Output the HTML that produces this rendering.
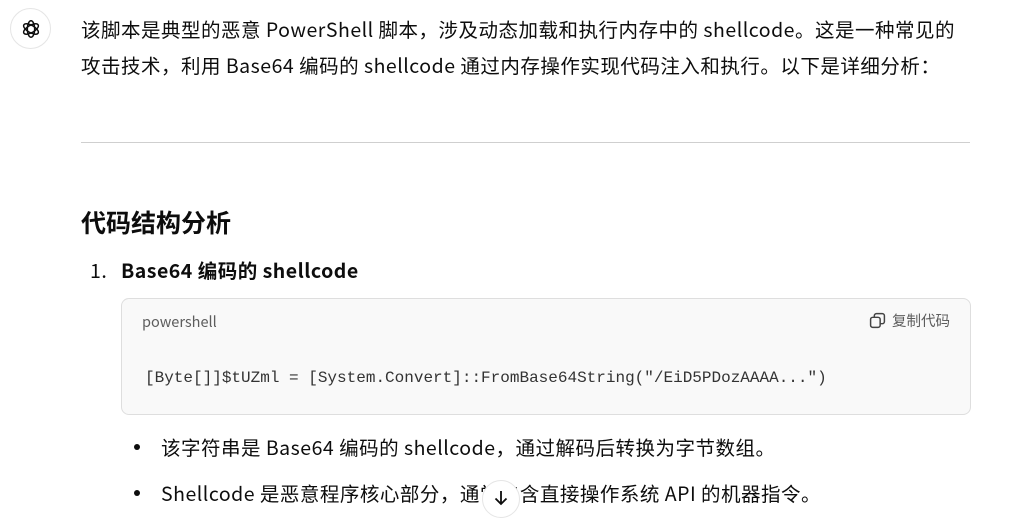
<!DOCTYPE html>
<html><head><meta charset="utf-8"><style>
body{margin:0;width:1036px;height:511px;overflow:hidden;background:#fff;font-family:"Noto Sans CJK SC","Liberation Sans",sans-serif;color:#0d0d0d;position:relative}
.t{position:absolute;left:81px;font-size:19.5px;white-space:nowrap;line-height:24px;letter-spacing:0.5px}
.av{position:absolute;left:10px;top:8px;width:41px;height:41px;border:1px solid #e5e5e5;border-radius:50%;display:flex;align-items:center;justify-content:center;box-sizing:border-box}
hr{position:absolute;left:81px;top:142px;width:889px;margin:0;border:0;border-top:1px solid #cfcfcf}
.code{position:absolute;left:121px;top:298px;width:848px;height:115px;border:1px solid #dedede;border-radius:8px;background:#f9f9f9}
.code .l{position:absolute;left:20px;top:12px;font-size:14.5px;color:#5d5d5d}
.code .c{position:absolute;right:20px;top:11px;font-size:14.5px;color:#5d5d5d;display:flex;align-items:center;gap:6px}
.code pre{position:absolute;left:23px;top:70px;margin:0;font-family:"Liberation Mono","DejaVu Sans Mono",monospace;font-size:16px;color:#333}
.dot{position:absolute;left:134px;width:6px;height:6px;border-radius:50%;background:#0d0d0d}
.arr{position:absolute;left:482px;top:480px;width:38px;height:38px;border:1px solid #e5e5e5;border-radius:50%;background:#fff;display:flex;justify-content:center;padding-top:8px;box-sizing:border-box}
</style></head><body>
<div class="av"><svg width="22" height="22" viewBox="0 0 24 24" fill="none" stroke="#0d0d0d" stroke-width="1.6"><g transform="translate(12 12)"><ellipse rx="4" ry="9" transform="rotate(0)"/><ellipse rx="4" ry="9" transform="rotate(60)"/><ellipse rx="4" ry="9" transform="rotate(120)"/></g></svg></div>
<div class="t" style="top:17px">该脚本是典型的恶意 PowerShell 脚本，涉及动态加载和执行内存中的 shellcode。这是一种常见的</div>
<div class="t" style="top:53px">攻击技术，利用 Base64 编码的 shellcode 通过内存操作实现代码注入和执行。以下是详细分析：</div>
<hr>
<div class="t" style="top:207px;font-size:25px;font-weight:bold;line-height:30px;letter-spacing:0">代码结构分析</div>
<div class="t" style="top:258px;left:90px">1.</div>
<div class="t" style="top:258px;left:121px;font-weight:bold">Base64 编码的 shellcode</div>
<div class="code"><div class="l">powershell</div><div class="c"><svg width="17" height="17" viewBox="0 0 16 16" fill="none" stroke="#444" stroke-width="1.4"><rect x="1.5" y="5" width="9" height="9.5" rx="2"/><path d="M5 5V3.5a2 2 0 0 1 2-2h5.5a2 2 0 0 1 2 2V9a2 2 0 0 1-2 2H10.5"/></svg>复制代码</div>
<pre>[Byte[]]$tUZml = [System.Convert]::FromBase64String("/EiD5PDozAAAA...")</pre></div>
<div class="dot" style="top:444px"></div>
<div class="t" style="top:435px;left:161px">该字符串是 Base64 编码的 shellcode，通过解码后转换为字节数组。</div>
<div class="dot" style="top:490px"></div>
<div class="t" style="top:481px;left:161px">Shellcode 是恶意程序核心部分，通常包含直接操作系统 API 的机器指令。</div>
<div class="arr"><svg width="18" height="18" viewBox="0 0 18 18" fill="none" stroke="#0d0d0d" stroke-width="1.8"><path d="M9 2v13M3.5 9.5L9 15l5.5-5.5"/></svg></div>
</body></html>
